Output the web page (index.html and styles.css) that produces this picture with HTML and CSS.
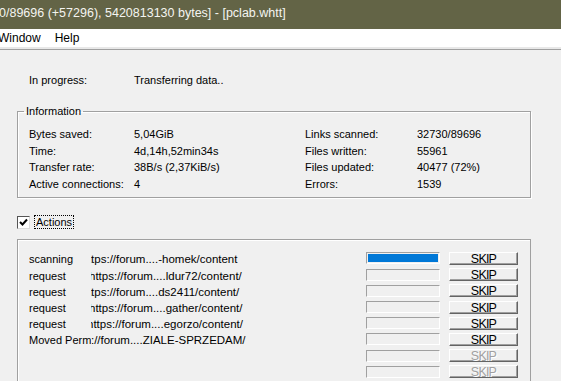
FILE: index.html
```html
<!DOCTYPE html>
<html lang="en">
<head>
  <meta charset="UTF-8">
  <title>pclab.whtt</title>
  <link rel="stylesheet" href="styles.css">
</head>
<body>

  <div class="titlebar">0/89696 (+57296), 5420813130 bytes] - [pclab.whtt]</div>
  <div class="menubar">
    <span class="menu-item first">Window</span>
    <span class="menu-item">Help</span>
  </div>

  <div class="main">
    <div class="status">
      <span class="status-label">In progress:</span>
      <span>Transferring data..</span>
    </div>

    <fieldset class="info">
      <legend>Information</legend>
      <div class="info-grid">
        <span>Bytes saved:</span><span>5,04GiB</span>
        <span>Links scanned:</span><span>32730/89696</span>
        <span>Time:</span><span>4d,14h,52min34s</span>
        <span>Files written:</span><span>55961</span>
        <span>Transfer rate:</span><span>38B/s (2,37KiB/s)</span>
        <span>Files updated:</span><span>40477 (72%)</span>
        <span>Active connections:</span><span>4</span>
        <span>Errors:</span><span>1539</span>
      </div>
    </fieldset>

    <div class="actions-toggle">
      <span class="checkbox">
        <svg width="9" height="9" viewBox="0 0 9 9"><polyline points="1,4 3.5,6.5 8,1.5" fill="none" stroke="#000" stroke-width="2"/></svg>
      </span>
      <span class="focus-label">Actions</span>
    </div>

    <div class="actions">
      <div class="action-row">
        <span class="state">scanning</span>
        <span class="url"><span style="margin-left:-9.5px">https://forum....-homek/content</span></span>
        <span class="bar"><span class="fill" style="width:100%"></span></span>
        <button class="skip">SKIP</button>
      </div>
      <div class="action-row">
        <span class="state">request</span>
        <span class="url"><span style="margin-left:-2px">https://forum....ldur72/content/</span></span>
        <span class="bar"></span>
        <button class="skip">SKIP</button>
      </div>
      <div class="action-row">
        <span class="state">request</span>
        <span class="url"><span style="margin-left:-9.5px">https://forum....ds2411/content/</span></span>
        <span class="bar"></span>
        <button class="skip">SKIP</button>
      </div>
      <div class="action-row">
        <span class="state">request</span>
        <span class="url"><span style="margin-left:-2px">https://forum....gather/content/</span></span>
        <span class="bar"></span>
        <button class="skip">SKIP</button>
      </div>
      <div class="action-row">
        <span class="state">request</span>
        <span class="url"><span style="margin-left:-4px">https://forum....egorzo/content/</span></span>
        <span class="bar"></span>
        <button class="skip">SKIP</button>
      </div>
      <div class="action-row">
        <span class="state">Moved Perm</span>
        <span class="url"><span style="margin-left:-25px">https://forum....ZIALE-SPRZEDAM/</span></span>
        <span class="bar"></span>
        <button class="skip">SKIP</button>
      </div>
      <div class="action-row">
        <span class="state"></span>
        <span class="url"></span>
        <span class="bar"></span>
        <button class="skip" disabled>SKIP</button>
      </div>
      <div class="action-row">
        <span class="state"></span>
        <span class="url"></span>
        <span class="bar"></span>
        <button class="skip" disabled>SKIP</button>
      </div>
    </div>
  </div>

</body>
</html>
```

FILE: styles.css
```css
html, body {
    margin: 0;
    height: 100%;
    overflow: hidden;
  }

  body {
    background: #f0f0f0;
    font-family: "Liberation Sans", Arial, sans-serif;
    font-size: 11px;
    color: #000;
  }

  .titlebar {
    height: 29px;
    line-height: 27px;
    background: #636446;
    color: #f4f4f0;
    font-size: 12.5px;
    margin-left: -1px;
    white-space: nowrap;
  }

  .menubar {
    height: 18px;
    line-height: 18px;
    background: #fff;
    border-bottom: 2px solid #e8e8e8;
    font-size: 12px;
    display: flex;
    gap: 14px;
    white-space: nowrap;
  }

  .menu-item.first {
    margin-left: -2px;
  }

  .main {
    border-top: 1px solid #a0a0a0;
    padding: 22px 0 0 17px;
  }

  .status {
    display: flex;
    padding-left: 12px;
    line-height: 16px;
  }

  .status-label {
    width: 105px;
  }

  .info {
    margin: 16px 0 0;
    width: 514px;
    box-sizing: border-box;
    min-width: 0;
    padding: 8px 10px 5px 11px;
    border: 1px solid #a0a0a0;
    box-shadow: 1px 1px 0 #fff, inset 1px 1px 0 #fff;
  }

  .info legend {
    margin-left: -5px;
    padding: 0 2px;
    line-height: 14px;
  }

  .info-grid {
    display: grid;
    grid-template-columns: 105px 171px 112px auto;
    line-height: 16.6px;
  }

  .actions-toggle {
    margin-top: 17px;
    display: flex;
    align-items: center;
    height: 14px;
  }

  .checkbox {
    width: 13px;
    height: 13px;
    box-sizing: border-box;
    background: #fff;
    border: 1px solid;
    border-color: #555 #dcdcdc #dcdcdc #555;
    display: flex;
    align-items: center;
    justify-content: center;
  }

  .focus-label {
    margin-left: 4px;
    padding: 0 1px;
    line-height: 12px;
    border: 1px dotted #000;
  }

  .actions {
    margin-top: 10px;
    width: 514px;
    height: 200px;
    box-sizing: border-box;
    padding: 10px 0 0 11px;
    border: 1px solid #a0a0a0;
    box-shadow: inset 1px 1px 0 #fff;
  }

  .action-row {
    display: grid;
    grid-template-columns: 62px 275px 74px 78px;
    align-items: center;
    height: 16.2px;
  }

  .state,
  .url {
    overflow: hidden;
    white-space: nowrap;
    padding-top: 3px;
    line-height: 13px;
  }

  .url {
    font-size: 11.5px;
  }

  .bar {
    height: 12px;
    box-sizing: border-box;
    padding: 1px;
    border: 1px solid;
    border-color: #a0a0a0 #fff #fff #a0a0a0;
    display: flex;
  }

  .fill {
    background: #0078d7;
  }

  .skip {
    margin-left: 9px;
    width: 69px;
    height: 13px;
    padding: 0;
    box-sizing: border-box;
    background: #f0f0f0;
    border: 1px solid;
    border-color: #fff #646464 #646464 #fff;
    box-shadow: inset -1px -1px 0 #a0a0a0;
    font-family: "Liberation Sans", Arial, sans-serif;
    font-size: 12.5px;
    line-height: 12px;
    letter-spacing: -0.8px;
    color: #000;
    text-align: center;
  }

  .skip:disabled {
    color: #a0a0a0;
    text-shadow: 1px 1px 0 #fff;
  }
```
